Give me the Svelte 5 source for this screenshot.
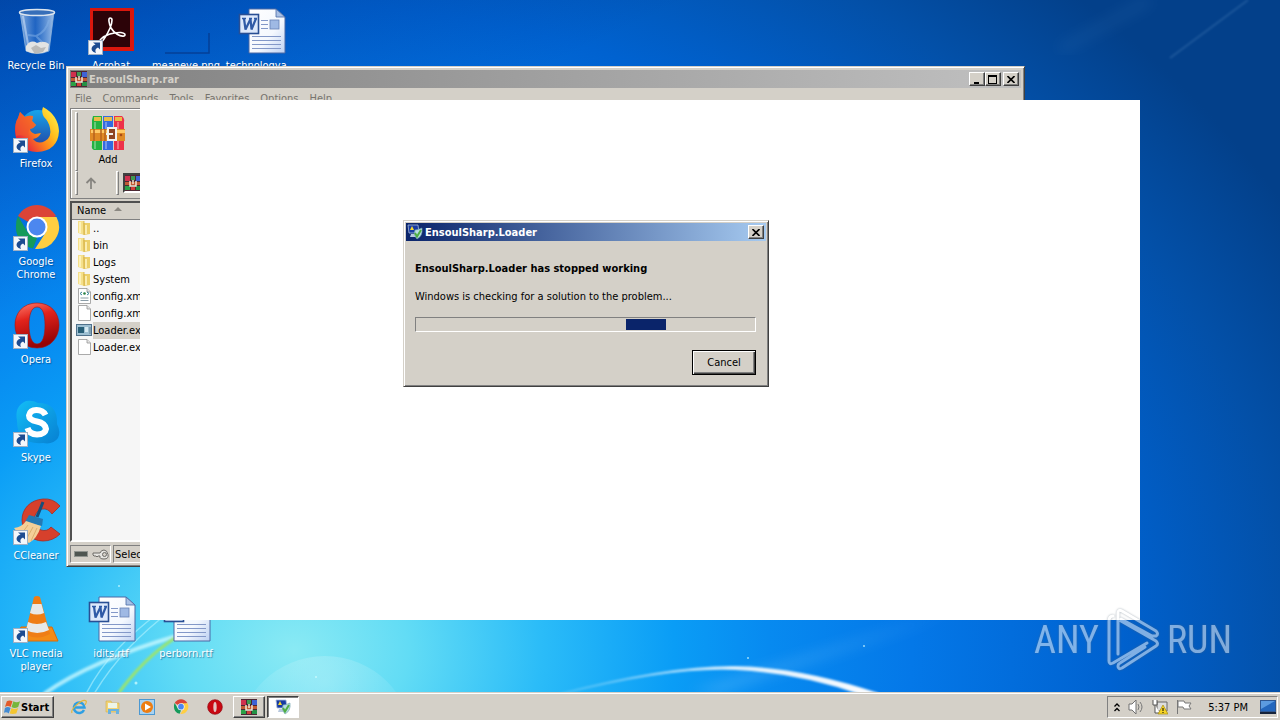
<script>
  const shortcuts = [
    { name: 'Recycle Bin', icon: 'bin', col: 1, row: 1 },
    { name: 'Acrobat', icon: 'acrobat', col: 2, row: 1, link: true },
    { name: 'meaneye.png', icon: 'image', col: 3, row: 1 },
    { name: 'technologya...', icon: 'word', col: 4, row: 1 },
    { name: 'Firefox', icon: 'firefox', col: 1, row: 2, link: true },
    { name: 'Google Chrome', icon: 'chrome', col: 1, row: 3, link: true },
    { name: 'Opera', icon: 'opera', col: 1, row: 4, link: true },
    { name: 'Skype', icon: 'skype', col: 1, row: 5, link: true },
    { name: 'CCleaner', icon: 'ccleaner', col: 1, row: 6, link: true },
    { name: 'VLC media player', icon: 'vlc', col: 1, row: 7, link: true },
    { name: 'idits.rtf', icon: 'word', col: 2, row: 7 },
    { name: 'perborn.rtf', icon: 'word', col: 3, row: 7 }
  ];
  const menus = ['File', 'Commands', 'Tools', 'Favorites', 'Options', 'Help'];
  const files = [
    { name: '..', kind: 'folder' },
    { name: 'bin', kind: 'folder' },
    { name: 'Logs', kind: 'folder' },
    { name: 'System', kind: 'folder' },
    { name: 'config.xml', kind: 'xml' },
    { name: 'config.xml', kind: 'file' },
    { name: 'Loader.exe', kind: 'exe', selected: true },
    { name: 'Loader.exe', kind: 'file' }
  ];
  const pinned = [
    { name: 'Internet Explorer', icon: 'ie' },
    { name: 'Windows Explorer', icon: 'explorer' },
    { name: 'Media Player', icon: 'media' },
    { name: 'Google Chrome', icon: 'chrome' },
    { name: 'Opera', icon: 'operaflat' },
    { name: 'WinRAR', icon: 'rar', state: 'open' },
    { name: 'EnsoulSharp.Loader', icon: 'report', state: 'active' }
  ];
  const progress = { start: 62, width: 12 };
</script>

{#snippet glyph(kind)}
  {#if kind === 'bin'}
    <svg viewBox="0 0 48 48" aria-hidden="true">
      <defs><linearGradient id="binG"><stop offset="0" stop-color="#b9d4f2" stop-opacity=".75" /><stop offset=".45" stop-color="#3a78cf" stop-opacity=".55" /><stop offset="1" stop-color="#c6dcf4" stop-opacity=".8" /></linearGradient></defs>
      <path d="M7 4 L13 43 Q24 48 36 43 L41 4Z" fill="url(#binG)" stroke="#8fb4dc" stroke-width=".8" />
      <path d="M13 38 Q18 31 24 35 Q31 32 36 36 L35 43 Q24 48 13 43Z" fill="#e3e4e3" />
      <path d="M18 40l5-3 5 3 5-1-3 5-8 2z" fill="#a9a9a7" opacity=".7" />
      <path d="M36 12Q33 24 23 28M15 27l8 1 6 6" stroke="#84b1e8" stroke-width="2" fill="none" opacity=".5" />
      <path d="M10 8L15 36" stroke="#e8f2ff" stroke-width="2" opacity=".45" />
      <ellipse cx="24" cy="4.500" rx="17.500" ry="3" fill="#376fb9" stroke="#dce5ef" stroke-width="1.500" />
    </svg>
  {:else if kind === 'acrobat'}
    <svg viewBox="0 0 48 48" aria-hidden="true">
      <rect x="2" y="0" width="44" height="43" fill="#d9170d" /><rect x="5" y="3" width="37" height="36" fill="#2c0308" />
      <path d="M22 10C20 10 21 16 23 20C26 25 32 29 36 28C38 27 37 25 33 24.500C26 24 17 27 13 31C9 35 12 37 16 31C20 25 24 17 24 12Q24 10 22 10Z" fill="none" stroke="#fff" stroke-width="1.600" />
    </svg>
  {:else if kind === 'image'}
    <svg viewBox="0 0 48 48" aria-hidden="true"><path d="M2 45H46V25" fill="none" stroke="#06337f" stroke-width="1.500" opacity=".65" /></svg>
  {:else if kind === 'word'}
    <svg viewBox="0 0 48 48" aria-hidden="true">
      <defs><linearGradient id="pg" x2="1" y2="1"><stop offset="0" stop-color="#fff" /><stop offset=".6" stop-color="#f4f8fe" /><stop offset="1" stop-color="#bcd0f2" /></linearGradient></defs>
      <path d="M11 1H38L47 9V45H11Z" fill="url(#pg)" stroke="#4a69a5" stroke-width="1" />
      <path d="M38 1V9H47Z" fill="#a9c0e4" stroke="#4a69a5" stroke-width=".8" />
      <path d="M23 12.500h7M23 16.500h7M23 20.500h7M14 28.500h29M14 32.500h29M14 36.500h29M14 40.500h29" stroke="#8398c8" stroke-width="1" />
      <rect x="32" y="12" width="9" height="9" fill="#9fb9e4" stroke="#6680b4" stroke-width=".8" />
      <rect x="1.500" y="6.500" width="19" height="19" fill="#dce8fb" stroke="#294f94" stroke-width="1.600" />
      <path d="M4 10.500H8M11 10.500H14M16 10.500H19" stroke="#2f5aa6" stroke-width="1.400" /><path d="M6 10.500L7.500 21.500L12.500 11L13.500 21.500L18 10.500" fill="none" stroke="#2f5aa6" stroke-width="2.200" stroke-linejoin="bevel" />
    </svg>
  {:else if kind === 'firefox'}
    <svg viewBox="0 0 48 48" aria-hidden="true">
      <defs>
        <linearGradient id="ffA" x1=".95" y1=".1" x2=".1" y2=".7"><stop offset="0" stop-color="#fff04a" /><stop offset=".35" stop-color="#ffc01e" /><stop offset=".6" stop-color="#ff8a1c" /><stop offset="1" stop-color="#e8293c" /></linearGradient>
        <linearGradient id="ffB" y2="1" x2="0"><stop offset="0" stop-color="#16a5ec" /><stop offset="1" stop-color="#2448a6" /></linearGradient>
      </defs>
      <circle cx="25" cy="22" r="18" fill="url(#ffB)" />
      <path d="M30 1Q45 9 46 25Q45 45 24 46Q3 45 2 25Q2 16 5 12L7 6L12 11Q16 9 20 10L19 15L23 19Q21 22 17 23Q17 26 22 28L28 27Q26 32 20 33Q25 39 32 35Q39 31 37 22Q36 16 31 11Q28 6 30 1Z" fill="url(#ffA)" />
      <path d="M7 6L12 11Q16 9 20 10L19 15L23 19Q21 22 17 23Q14 27 16 31Q8 28 3 30Q1 17 5 12Z" fill="#f0552e" opacity=".7" />
    </svg>
  {:else if kind === 'chrome'}
    <svg viewBox="0 0 48 48" aria-hidden="true">
      <path d="M24 23L5 12A22 22 0 0 1 43 12Z" fill="#db4437" /><path d="M2.900 23A22 22 0 0 1 5 12L15 29 24 34 20 44.600A22 22 0 0 1 2.900 23Z" fill="#159a5b" />
      <path d="M24 13H43.500A22 22 0 0 1 22 45L33 28Z" fill="#ffce42" />
      <circle cx="24" cy="23" r="10.500" fill="#fff" /><circle cx="24" cy="23" r="8.500" fill="#4c87ef" />
    </svg>
  {:else if kind === 'opera'}
    <svg viewBox="0 0 48 48" aria-hidden="true">
      <defs><linearGradient id="opG" x2=".3" y2="1"><stop offset="0" stop-color="#ff8070" /><stop offset=".4" stop-color="#e2231c" /><stop offset="1" stop-color="#970406" /></linearGradient></defs>
      <path fill-rule="evenodd" d="M24 1C38 1 46 11 46 23S38 46 24 46 2 35 2 23 10 1 24 1ZM24 5C18 5 16 14 16 23S18 42 24 42 32 33 32 23 30 5 24 5Z" fill="url(#opG)" stroke="#a31212" stroke-width=".6" />
    </svg>
  {:else if kind === 'operaflat'}
    <svg viewBox="0 0 48 48" aria-hidden="true"><circle cx="24" cy="24" r="22" fill="#c90812" stroke="#8e0710" stroke-width="2" /><ellipse cx="24" cy="24" rx="5" ry="15" fill="#e3c4c2" /></svg>
  {:else if kind === 'skype'}
    <svg viewBox="0 0 48 48" aria-hidden="true">
      <defs><linearGradient id="skG" x2="1" y2="1"><stop offset="0" stop-color="#13bdf6" /><stop offset="1" stop-color="#0780d2" /></linearGradient></defs>
      <path d="M13 1Q20 0 25 3Q45 3 44 24Q48 32 45 38Q40 45 30 43Q4 45 4 21Q1 6 13 1Z" fill="url(#skG)" />
      <path d="M32.500 15Q30 10 23.500 10T16 15.500Q16 20 24 21.500T33 29Q32 34.500 24 34.500Q16.500 34.500 14.500 28" fill="none" stroke="#fff" stroke-width="6" />
    </svg>
  {:else if kind === 'ccleaner'}
    <svg viewBox="0 0 48 48" aria-hidden="true">
      <path d="M47 8Q40 0 30 1C17 2 9 11 9 22S18 43 30 43Q40 43 47 36L38 29Q34 34 28 32T21 21Q23 12 29 11T39 16Z" fill="#d6402c" stroke="#aa2b21" stroke-width=".8" />
      <path d="M30 4L24 19" stroke="#164e7b" stroke-width="3" /><path d="M16 17L30 21 29 28 12 24Z" fill="#2579b3" />
      <path d="M13 23L28 28Q24 41 16 45Q8 40 1 30Q9 29 13 23Z" fill="#f4cf98" /><path d="M15 27l-6 8M20 29l-6 11M24 30l-6 13" stroke="#dcae6e" stroke-width="1" />
    </svg>
  {:else if kind === 'vlc'}
    <svg viewBox="0 0 48 48" aria-hidden="true">
      <path d="M8 31H39L45 45H1Z" fill="#f38b16" stroke="#d86c0a" stroke-width="1" /><path d="M21 1Q24-1 27 1L37 38Q24 45 12 38Z" fill="#ef7d15" />
      <path d="M19.500 8H28.500L31 17Q24 20 17 17ZM15 26Q24 30 33 26L36 34Q24 40 13 34Z" fill="#e8e9e8" />
    </svg>
  {:else if kind === 'ie'}
    <svg viewBox="0 0 16 16" aria-hidden="true"><path d="M13 11A5.300 5.300 0 1 1 13.500 8.500H4" fill="none" stroke="#2e9fe3" stroke-width="2.500" /><path d="M1 14C-1 10 12-1 15 2q1 1-1 4" fill="none" stroke="#e2b63c" stroke-width="1.200" /></svg>
  {:else if kind === 'explorer'}
    <svg viewBox="0 0 16 16" aria-hidden="true"><path d="M1 2H6L7 4H14V13H1Z" fill="#f2d375" stroke="#d1ae4b" stroke-width=".6" /><path d="M3 4h9v5H3z" fill="#edf5e8" /><path d="M3 15V10H14V15H11V12H6V15Z" fill="#6bb2df" /></svg>
  {:else if kind === 'media'}
    <svg viewBox="0 0 16 16" aria-hidden="true"><rect x=".5" y=".5" width="15" height="15" fill="#a8d2f1" stroke="#4b98d2" /><circle cx="8" cy="8" r="6" fill="#ed7d12" /><path d="M6 4.500L12 8 6 11.500Z" fill="#fff" /></svg>
  {:else if kind === 'rar'}
    <svg viewBox="0 0 16 16" aria-hidden="true">
      <rect width="16" height="16" fill="#4d2733" /><path d="M0 1H5V6H0Z" fill="#d02f4e" /><path d="M6 1H10V5H6Z" fill="#3f9950" /><path d="M11 1H16V6H11Z" fill="#3e62d6" />
      <path d="M0 11H5V15H0Z" fill="#2ba046" /><path d="M6 12H10V15H6Z" fill="#d23f3c" /><path d="M11 11H16V15H11Z" fill="#249145" />
      <path d="M0 7H16V10H0Z" fill="#c25a34" /><path d="M5 6V11H11V6M8 5V9" fill="none" stroke="#f7eedc" stroke-width="1.400" />
    </svg>
  {:else if kind === 'report'}
    <svg viewBox="0 0 16 16" aria-hidden="true">
      <path d="M1 1H11L12 9H2Z" fill="#173aa2" stroke="#a9bedb" stroke-width=".8" /><path d="M4 10H9L10 13H3Z" fill="#b7c8de" />
      <path d="M5 2L7 6H3Z" fill="#f7d930" /><path d="M8 6Q11 6 15 4Q16 12 10 15Q6 11 8 6Z" fill="#b9dde0" stroke="#6c9dab" stroke-width=".6" /><path d="M8 9L10 12.500 14 6" fill="none" stroke="#4fae43" stroke-width="2" />
    </svg>
  {:else if kind === 'books'}
    <svg viewBox="0 0 36 36" aria-hidden="true">
      <path d="M3 1H12V35H4Q1 34 2 30V5Z" fill="#24b341" /><path d="M13 1H23V35H13Z" fill="#336be0" /><path d="M24 1H32Q35 4 34 7V35H24Z" fill="#ed3149" />
      <path d="M4 2h7v4H4zM14 2h8v4h-8zM25 2h7v4h-7z" fill="#e9bc45" /><path d="M5 7v27M16 7v27M28 7v27" stroke="#fff" stroke-opacity=".3" stroke-width="2" />
      <path d="M0 14H35V26H0Z" fill="#e08a25" /><path d="M1 15H35V18H1Z" fill="#ffc965" /><path d="M4 14v12M11 14v12M15 14v12" stroke="#b6621d" stroke-width="1.500" />
      <rect x="18" y="13" width="8" height="12" fill="#8e4520" stroke="#f2f2eb" stroke-width="2" /><path d="M16 19H23" stroke="#f2f2eb" stroke-width="2" /><circle cx="31" cy="20" r="1.300" fill="#a64a16" />
    </svg>
  {:else if kind === 'folder'}
    <svg viewBox="0 0 16 16" aria-hidden="true"><path d="M2 1H8V15L2 13Z" fill="#f5e08a" /><path d="M7 3H14V14L8 15Z" fill="#ecd06a" /><path d="M4 2v11M10 5v9" stroke="#fff6c8" stroke-width="1.500" /><path d="M8 1V15" stroke="#c89f32" stroke-width=".7" /></svg>
  {:else if kind === 'exe'}
    <svg viewBox="0 0 16 16" aria-hidden="true"><rect x=".5" y="2.500" width="15" height="11" fill="#9dbfd2" stroke="#50718b" /><path d="M2 5h6v6H2z" fill="#285f78" /><path d="M9 5h3v5H9z" fill="#d6eaf2" /><path d="M13 5h2v7h-2z" fill="#7f9fb2" /></svg>
  {:else}
    <svg viewBox="0 0 16 16" aria-hidden="true">
      <path d="M2.500 .5H11L14.500 4V15.500H2.500Z" fill="#fff" stroke="#969696" stroke-width=".8" /><path d="M11 .5V4H14.500" fill="#e5e5e5" stroke="#969696" stroke-width=".8" />
      {#if kind === 'xml'}<path d="M6 4L4 5.500L6 7M11 4L13 5.500L11 7" fill="none" stroke="#34859c" /><circle cx="8.500" cy="5.500" r="1.300" fill="#288043" /><path d="M4.500 10h8M4.500 12.500h8" stroke="#6c8390" stroke-width=".8" />{/if}
    </svg>
  {/if}
{/snippet}

{#snippet cross()}
  <svg width="8" height="7" viewBox="0 0 8 7" aria-hidden="true"><path d="M.5 0L7.500 7M7.500 0L.5 7" stroke="#000" stroke-width="1.600" /></svg>
{/snippet}

<div class="screen">
  <main class="desktop">
    <svg class="wallpaper" viewBox="0 0 1280 692" preserveAspectRatio="none" aria-hidden="true">
      <defs>
        <filter id="soft"><feGaussianBlur stdDeviation="1" /></filter>
        <filter id="haze"><feGaussianBlur stdDeviation="7" /></filter>
        <linearGradient id="arc"><stop offset="0" stop-color="#fff" stop-opacity=".15" /><stop offset=".65" stop-color="#fff" stop-opacity=".8" /><stop offset="1" stop-color="#fff" /></linearGradient>
        <radialGradient id="orb" cy=".15"><stop offset="0" stop-color="#fff" stop-opacity=".22" /><stop offset="1" stop-color="#fff" stop-opacity=".04" /></radialGradient>
      </defs>
      <path d="M690 692L960 610 930 620 720 692Z" fill="#8dd0ff" opacity=".35" filter="url(#haze)" />
      <circle cx="325" cy="744" r="88" fill="url(#orb)" />
      <path d="M560 694Q670 666 735 667T878 694L862 694Q800 672 735 669T560 694Z" fill="url(#arc)" filter="url(#soft)" stroke="url(#arc)" stroke-width="2" />
      <path d="M44 694Q90 661 180 635" fill="none" stroke="#cffaff" stroke-width="4" opacity=".75" filter="url(#soft)" />
      <path d="M86 694Q108 650 160 612M94 694Q122 647 172 610" fill="none" stroke="#bdf5ff" stroke-width="1.500" opacity=".55" />
      <path d="M118 694Q143 659 175 638" fill="none" stroke="#9de56b" stroke-width="3" filter="url(#soft)" />
      <path d="M1170 58L1248 0" stroke="#7aa9d6" stroke-width="2" opacity=".22" filter="url(#soft)" />
      <path d="M1060 50L1150 0" stroke="#4f8bc4" stroke-width="10" opacity=".14" filter="url(#haze)" />
      <g fill="#d9ffff" opacity=".7"><circle cx="119" cy="586" r="1" /><circle cx="136" cy="683" r="1.500" /><circle cx="316" cy="677" r="1" /><circle cx="864" cy="646" r="1" /><circle cx="748" cy="658" r="1" /></g>
    </svg>

    <div class="shortcuts">
      {#each shortcuts as item}
        <button class="shortcut" style="grid-column: {item.col}; grid-row: {item.row}">
          <span class="picture">
            {@render glyph(item.icon)}
            {#if item.link}
              <svg class="arrow" viewBox="0 0 15 15" aria-hidden="true"><rect x=".5" y=".5" width="14" height="14" fill="#f4f7fb" stroke="#9fb0c4" /><path d="M5 2.500H12V9.500L10 7.500Q6 9 8 13Q2 11 4 7Q5 5 7.500 4.500Z" fill="#1d4c91" /></svg>
            {/if}
          </span>
          <span class="label">{item.name}</span>
        </button>
      {/each}
    </div>

    <section class="window archive" aria-label="EnsoulSharp.rar">
      <header class="titlebar inactive">
        <span class="small">{@render glyph('rar')}</span>
        <h2>EnsoulSharp.rar</h2>
        <div class="controls">
          <button class="ctl" aria-label="Minimize"><svg width="10" height="9" viewBox="0 0 10 9" aria-hidden="true"><path d="M2 7H7V9H2Z" /></svg></button>
          <button class="ctl" aria-label="Maximize"><svg width="10" height="9" viewBox="0 0 10 9" aria-hidden="true"><path fill-rule="evenodd" d="M0 0H9V9H0ZM1 2V8H8V2Z" /></svg></button>
          <button class="ctl apart" aria-label="Close">{@render cross()}</button>
        </div>
      </header>
      <nav class="menubar">
        {#each menus as menu}<button>{menu}</button>{/each}
      </nav>
      <div class="toolbars">
        <div class="tools">
          <i class="grip"></i>
          <button class="add"><span class="large">{@render glyph('books')}</span>Add</button>
        </div>
        <div class="address">
          <i class="grip"></i>
          <button class="up" aria-label="Up one level"><svg width="12" height="12" viewBox="0 0 12 12" aria-hidden="true"><path d="M6 12V2M1.500 6L6 1.500 10.500 6" fill="none" stroke="#878580" stroke-width="1.800" /></svg></button>
          <i class="grip"></i>
          <div class="path"><span class="small">{@render glyph('rar')}</span></div>
        </div>
      </div>
      <div class="list">
        <table>
          <thead><tr><th>Name <svg width="8" height="4" viewBox="0 0 8 4" aria-hidden="true"><path d="M0 4L4 0 8 4Z" fill="#8b8882" /></svg></th></tr></thead>
          <tbody>
            {#each files as file}
              <tr><td><div class="file"><span class="small">{@render glyph(file.kind)}</span><span class="filename" class:selected={file.selected}>{file.name}</span></div></td></tr>
            {/each}
          </tbody>
        </table>
      </div>
      <footer class="status">
        <div class="cell keys">
          <svg width="14" height="6" viewBox="0 0 14 6" aria-hidden="true"><rect x=".5" y=".5" width="13" height="5" fill="#4f5651" stroke="#8f938e" /></svg>
          <svg width="17" height="11" viewBox="0 0 17 11" aria-hidden="true"><path d="M1 4H8Q9 1 12 1T16 5.500 12 10 8 7H6L5 8 4 7H2L1 6Z" fill="#e5e4e0" stroke="#6d6b67" /><circle cx="12.500" cy="5.500" r="2" fill="#d4d0c8" stroke="#6d6b67" /></svg>
        </div>
        <div class="cell grow">Selected</div>
      </footer>
    </section>

    <div class="blank"></div>

    <div class="window dialog" role="dialog" aria-labelledby="dialog-title">
      <header class="titlebar">
        <span class="small">{@render glyph('report')}</span>
        <h2 id="dialog-title">EnsoulSharp.Loader</h2>
        <div class="controls"><button class="ctl" aria-label="Close">{@render cross()}</button></div>
      </header>
      <div class="content">
        <h3>EnsoulSharp.Loader has stopped working</h3>
        <p>Windows is checking for a solution to the problem...</p>
        <div class="progress" role="progressbar" aria-label="Checking for a solution"><span style="margin-left: {progress.start}%; width: {progress.width}%"></span></div>
        <button class="cancel">Cancel</button>
      </div>
    </div>

    <div class="watermark">
      <span>ANY</span>
      <svg width="56" height="64" viewBox="0 0 56 64" aria-hidden="true">
        <path d="M8 8Q4 8 4 13V53Q4 57 8 55L42 35M13 46V5Q13 1 17 3L51 23Q54 26 51 28H47L16 11M16 13L51 33Q54 36 51 38L17 60Q13 62 13 58Q13 56 15 55L40 39" fill="none" stroke="#fff" stroke-width="3" stroke-linejoin="round" stroke-linecap="round" />
      </svg>
      <span>RUN</span>
    </div>
  </main>

  <footer class="taskbar">
    <button class="start">
      <svg width="17" height="16" viewBox="0 0 18 16" aria-hidden="true"><path d="M3 2Q6 0 9 2L7 8Q4 6 1 8Z" fill="#e35a28" /><path d="M10 2Q13 4 17 2L15 8Q11 10 8 8Z" fill="#76b63b" /><path d="M1 9Q4 7 7 9L5 15Q3 13 0 14Z" fill="#438bd2" /><path d="M8 9Q11 11 15 9L13 15Q9 16 6 15Z" fill="#f3c530" /></svg>
      Start
    </button>
    <nav class="pinned">
      {#each pinned as app}
        <button class="task {app.state ?? ''}" aria-label={app.name}><span class="small">{@render glyph(app.icon)}</span></button>
      {/each}
    </nav>
    <div class="tray">
      <svg width="6" height="9" viewBox="0 0 6 9" aria-hidden="true"><path d="M.5 3.500L3 1 5.500 3.500M.5 8L3 5.500 5.500 8" fill="none" stroke="#000" stroke-width="1.300" /></svg>
      <svg width="16" height="16" viewBox="0 0 16 16" aria-hidden="true"><path d="M1 5H4L8 1V15L4 11H1Z" fill="#fff" stroke="#707070" /><path d="M10 5q2 3 0 6M12 3q4 5 0 10" fill="none" stroke="#777" /></svg>
      <svg width="16" height="16" viewBox="0 0 16 16" aria-hidden="true"><path d="M5 3H15V12H5Z" fill="#ddd" stroke="#666" /><path d="M1 1V6H5V1M3 6V14H8" fill="#fff" stroke="#555" /><path d="M11 6L16 15H6Z" fill="#f6d426" stroke="#a68c10" stroke-width=".7" /><path d="M11 9v3M11 13v1" stroke="#000" /></svg>
      <svg width="16" height="16" viewBox="0 0 16 16" aria-hidden="true"><path d="M1.500 1V15M2 2H8L9 4H15L13 7 15 10H8L7 8H2Z" fill="#fff" stroke="#777" /></svg>
      <time>5:37 PM</time>
      <button class="show" aria-label="Show desktop"><svg width="16" height="14" viewBox="0 0 16 14" aria-hidden="true"><rect x=".5" y=".5" width="15" height="11" fill="#2467bd" stroke="#2f5791" /><path d="M1 1H15L1 9Z" fill="#5c9be0" /><path d="M0 12h16v2H0z" fill="#16233a" /></svg></button>
    </div>
  </footer>
</div>

<style>
  :global(body) { margin: 0; overflow: hidden; }
  .screen { display: flex; flex-direction: column; min-height: 100vh; font: 11px/13px "DejaVu Sans Condensed", Tahoma, sans-serif; color: #000; }
  .screen * { box-sizing: border-box; }
  button { font: inherit; color: inherit; margin: 0; padding: 0; border: 0; background: none; }
  h2, h3, p { margin: 0; font-size: 11px; }
  svg { display: block; flex: none; }
  .desktop {
    position: relative; flex: 1; overflow: hidden;
    background:
      linear-gradient(155deg, rgba(0, 24, 110, .3), transparent 25%),
      radial-gradient(ellipse 950px 750px at 23% 94%, #8aeaf4 0, #62dcf5 12%, #2bbcf8 26%, #0a9df6 40%, #078af0 50%, #0478e8 65%, #0062d0 86%, #0350a8 105%, #03408a 120%);
  }
  .wallpaper { position: absolute; inset: 0; width: 100%; height: 100%; }
  .shortcuts { position: relative; display: grid; grid-template-columns: repeat(4, 72px); grid-template-rows: repeat(7, 98px); column-gap: 3px; padding-top: 6px; width: max-content; }
  .shortcut { display: flex; flex-direction: column; align-items: center; gap: 3px; color: #fff; text-shadow: 1px 1px 1px rgba(0, 42, 92, .5); }
  .picture { position: relative; width: 48px; height: 50px; padding-top: 2px; margin-left: 2px; }
  .picture > :global(svg) { width: 48px; height: 48px; }
  .picture > .arrow { position: absolute; left: 0; bottom: 1px; width: 15px; height: 15px; }
  .label { text-align: center; }
  .small, .small :global(svg) { display: block; width: 16px; height: 16px; flex: none; }
  .large, .large :global(svg) { display: block; width: 36px; height: 36px; }

  .window { position: absolute; display: flex; flex-direction: column; background: #d4d0c8; border: 1px solid; border-color: #d4d0c8 #404040 #404040 #d4d0c8; box-shadow: inset 1px 1px #fff, inset -1px -1px #808080; padding: 2px; }
  .titlebar { display: flex; align-items: center; height: 18px; flex: none; gap: 2px; padding: 0 2px 0 1px; color: #fff; background: linear-gradient(90deg, #0a246a, #a6caf0); }
  .titlebar.inactive { color: #d4d0c8; background: linear-gradient(90deg, #808080, #c0c0c0); }
  .controls { display: flex; margin-left: auto; }
  .ctl { display: grid; place-items: center; width: 16px; height: 14px; background: #d4d0c8; border: 1px solid; border-color: #fff #404040 #404040 #fff; box-shadow: inset -1px -1px #808080; }
  .apart { margin-left: 2px; }
  .archive { left: 66px; top: 66px; width: 959px; height: 501px; padding: 3px; }
  .menubar { display: flex; gap: 11px; padding: 3px 5px; height: 20px; color: #77746e; }
  .toolbars { border: 1px solid #808080; box-shadow: inset 1px 1px #fff; height: 91px; padding: 3px; }
  .tools { display: flex; height: 59px; }
  .address { display: flex; height: 24px; align-items: center; }
  .grip { width: 3px; align-self: stretch; margin: 0 1px; border: 1px solid; border-color: #fff #808080 #808080 #fff; }
  .add { display: flex; flex-direction: column; align-items: center; gap: 2px; width: 58px; padding-top: 3px; }
  .up { display: flex; align-items: center; width: 36px; padding-left: 6px; }
  .path { flex: 1; margin-left: 3px; padding: 0; height: 20px; border: 2px solid; border-color: #404040 #fff #fff #404040; background: #fff; }
  .list { flex: 1; margin-top: 2px; background: #f6f6f6; border: 2px solid; border-color: #505050 #fff #fff #505050; }
  table { width: 100%; border-collapse: collapse; }
  th { height: 16px; padding: 0 5px; text-align: left; font-weight: normal; background: #d4d0c8; border-bottom: 1px solid #808080; }
  th svg { display: inline-block; vertical-align: 3px; margin-left: 5px; }
  td { padding: 0; }
  .file { display: flex; align-items: center; height: 17px; padding-left: 4px; gap: 1px; }
  .filename { flex: 1; line-height: 17px; }
  .selected { background: #d4d0c8; }
  .status { display: flex; gap: 2px; height: 21px; padding-top: 3px; }
  .cell { display: flex; align-items: center; gap: 4px; padding: 0 1px; border: 1px solid; border-color: #808080 #fff #fff #808080; }
  .keys { width: 41px; padding: 0 3px; }
  .grow { flex: 1; }
  .blank { position: absolute; left: 140px; top: 100px; width: 1000px; height: 520px; background: #fff; }

  .dialog { left: 403px; top: 220px; width: 366px; }
  .content { display: flex; flex-direction: column; padding: 21px 10px 9px 9px; }
  .content p { margin-top: 15px; }
  .progress { height: 15px; margin-top: 14px; padding: 1px; border: 1px solid; border-color: #808080 #fff #fff #808080; }
  .progress span { display: block; height: 100%; background: #0a246a; }
  .cancel { align-self: flex-end; width: 64px; height: 25px; margin-top: 18px; border: 1px solid #000; box-shadow: inset 1px 1px #fff, inset -1px -1px #404040, inset -2px -2px #808080; }

  .watermark { position: absolute; right: 48px; bottom: 20px; display: flex; align-items: center; gap: 6px; color: #fff; opacity: .5; filter: drop-shadow(0 0 1px #567); font: 38px/44px "Liberation Sans Narrow", "Roboto Condensed", "Open Sans Condensed", sans-serif; }

  .taskbar { display: flex; align-items: center; height: 28px; padding: 2px 2px 0 1px; background: #d4d0c8; box-shadow: inset 0 1px #d4d0c8, inset 0 2px #fff; z-index: 1; }
  .start { display: flex; align-items: center; width: 53px; height: 22px; padding: 0 2px; font-weight: bold; border: 1px solid; border-color: #fff #404040 #404040 #fff; box-shadow: inset -1px -1px #808080; }
  .pinned { display: flex; gap: 2px; margin-left: 9px; }
  .task { display: grid; place-items: center; width: 32px; height: 22px; }
  .open { border: 1px solid; border-color: #fff #404040 #404040 #fff; box-shadow: inset -1px -1px #808080; }
  .active { background: #fff; border: 1px solid; border-color: #404040 #fff #fff #404040; box-shadow: inset 1px 1px #808080; }
  .tray { display: flex; align-items: center; gap: 8px; margin-left: auto; height: 22px; padding: 0 1px 0 6px; border: 1px solid; border-color: #808080 #fff #fff #808080; }
  .tray time { margin: 0 4px 0 8px; }
</style>
